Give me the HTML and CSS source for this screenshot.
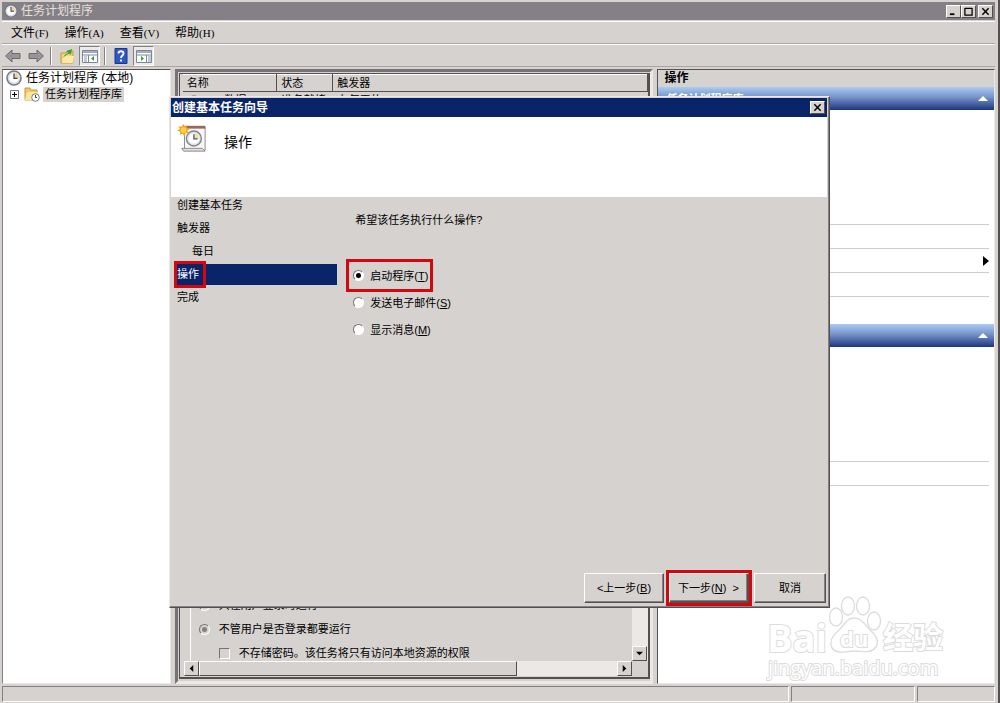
FILE: index.html
```
<!DOCTYPE html>
<html lang="zh-CN">
<head>
<meta charset="utf-8">
<title>任务计划程序</title>
<link rel="stylesheet" href="styles.css">
</head>
<body>

<svg class="defs" width="0" height="0">
  <symbol id="clock" viewBox="0 0 16 16">
    <circle cx="8" cy="8" r="7" fill="#e9eef3" stroke="#777b84" stroke-width="1.6"/>
    <circle cx="8" cy="8" r="5.2" fill="#fff" stroke="#b6c3d2" stroke-width=".6"/>
    <path d="M8 8V3a5 5 0 0 1 4.6 5z" fill="#f5d58a"/>
    <path d="M8 3.5V8.300h3.500" fill="none" stroke="#39415a" stroke-width="1.200"/>
  </symbol>
  <symbol id="close" viewBox="0 0 10 10">
    <path d="M1.500 1.500l7 7M8.500 1.500l-7 7" stroke="#000" stroke-width="1.600"/>
  </symbol>
</svg>

<div class="window">
  <header class="titlebar">
    <svg class="icon14"><use href="#clock"/></svg>
    <h1>任务计划程序</h1>
    <div class="winbtns">
      <button class="winbtn" aria-label="最小化"><svg viewBox="0 0 10 10"><path d="M1 8h5" stroke="#000" stroke-width="2"/></svg></button>
      <button class="winbtn" aria-label="最大化"><svg viewBox="0 0 10 10"><path d="M1 1.500h8M1 1v8h8V1" fill="none" stroke="#000" stroke-width="1.400"/></svg></button>
      <button class="winbtn last" aria-label="关闭"><svg><use href="#close"/></svg></button>
    </div>
  </header>

  <nav class="menubar">
    <button>文件<span class="key">(F)</span></button>
    <button>操作<span class="key">(A)</span></button>
    <button>查看<span class="key">(V)</span></button>
    <button>帮助<span class="key">(H)</span></button>
  </nav>

  <div class="toolbar">
    <button class="tool" aria-label="后退"><svg viewBox="0 0 18 16"><path d="M1.500 8L8 2v3.500h8v5H8V14z" fill="#999497" stroke="#6e6a6c"/></svg></button>
    <button class="tool" aria-label="前进"><svg viewBox="0 0 18 16"><path d="M16.500 8L10 2v3.500H2v5h8V14z" fill="#999497" stroke="#6e6a6c"/></svg></button>
    <i class="sep"></i>
    <button class="tool" aria-label="向上"><svg viewBox="0 0 18 16"><path d="M3 5h5l1-2h6v12H3z" fill="#f3d477" stroke="#c39a3c"/><path d="M4 15l1-7h11l-1 7z" fill="#fbe9a4"/><path d="M5 10c1-3 3-4 5-5L8.500 3 14 1l-1 6-1.500-1.500C9 6 7 8 5 10z" fill="#39a332"/></svg></button>
    <button class="tool pressed" aria-label="显示控制台树"><svg viewBox="0 0 18 16"><path d="M1.500 2.500h15v12h-15z" fill="#fff" stroke="#7e8795"/><path d="M2 4h14" stroke="#a2acc0" stroke-width="2"/><path d="M2 7h14M7.500 7v7" stroke="#7e8795"/><path d="M3 9h3M3 11h3M3 13h3" stroke="#8292ba"/><path d="M13 8v5l-3-2.500z" fill="#2da04a"/></svg></button>
    <i class="sep"></i>
    <button class="tool help" aria-label="帮助"><svg viewBox="0 0 18 16"><path d="M3 .5h12v15H3z" fill="#2f57c4" stroke="#1d3788"/><path d="M6.500 5.500c0-3 5-3 5 0 0 2-2.500 2-2.500 4.500M9 11.500v2" fill="none" stroke="#fff" stroke-width="1.800"/></svg></button>
    <button class="tool pressed" aria-label="显示操作窗格"><svg viewBox="0 0 18 16"><path d="M1.500 2.500h15v12h-15z" fill="#fff" stroke="#7e8795"/><path d="M2 4h14" stroke="#a2acc0" stroke-width="2"/><path d="M2 7h14M11.500 7v7" stroke="#7e8795"/><path d="M13 9h3M13 11h3M13 13h3" stroke="#8292ba"/><path d="M6 8v5l3-2.500z" fill="#2da04a"/></svg></button>
  </div>

  <main class="panes">
    <aside class="tree">
      <div class="node">
        <svg class="icon16"><use href="#clock"/></svg>
        <span>任务计划程序 (本地)</span>
      </div>
      <div class="node child">
        <button class="plus" aria-label="展开"><svg viewBox="0 0 9 9"><path d="M.5.5h8v8h-8z" fill="#fff" stroke="#777"/><path d="M2 4.500h5M4.500 2v5" stroke="#000"/></svg></button>
        <svg class="icon16" viewBox="0 0 16 16"><path d="M1 14V2h5l1 2h6v10z" fill="#efc866" stroke="#c79a3a"/><path d="M1 14l2-8h11l-1 8z" fill="#fbe6a0"/><circle cx="11.500" cy="11.500" r="3.800" fill="#fff" stroke="#777b84"/><path d="M11.500 9v2.500H13" fill="none" stroke="#39415a"/></svg>
        <span class="picked">任务计划程序库</span>
      </div>
    </aside>

    <section class="center">
      <div class="inner">
        <table class="tasks">
          <thead>
            <tr><th class="c1">名称</th><th class="c2">状态</th><th>触发器</th></tr>
          </thead>
          <tbody>
            <tr><td><svg class="icon12"><use href="#clock"/></svg> 050 数据</td><td>准备就绪</td><td>在每天的 0:00</td></tr>
          </tbody>
        </table>
        <div class="details">
          <div class="options">
            <label class="opt"><input type="radio" name="logon" disabled>只在用户登录时运行</label>
            <label class="opt"><input type="radio" name="logon" checked disabled>不管用户是否登录都要运行</label>
            <label class="opt sub"><input type="checkbox" disabled>不存储密码。该任务将只有访问本地资源的权限</label>
          </div>
          <div class="vscroll"><button class="arrow" aria-label="向下滚动"><svg viewBox="0 0 8 8"><path d="M0 2h8L4 6z"/></svg></button></div>
        </div>
        <div class="hscroll">
          <button class="arrow" aria-label="向左滚动"><svg viewBox="0 0 8 8"><path d="M6 0v8L2 4z"/></svg></button>
          <div class="track"><div class="thumb"></div></div>
          <button class="arrow" aria-label="向右滚动"><svg viewBox="0 0 8 8"><path d="M2 0v8l4-4z"/></svg></button>
        </div>
      </div>
    </section>

    <aside class="actions">
      <h2>操作</h2>
      <div class="group"><span>任务计划程序库</span><svg class="up" viewBox="0 0 10 6"><path d="M5 0l5 5H0z" fill="#fff"/></svg></div>
      <ul class="items">
        <li class="tall"></li>
        <li></li>
        <li class="more"><svg viewBox="0 0 6 10"><path d="M0 0l6 5-6 5z"/></svg></li>
        <li></li>
      </ul>
      <div class="group"><span></span><svg class="up" viewBox="0 0 10 6"><path d="M5 0l5 5H0z" fill="#fff"/></svg></div>
      <ul class="items">
        <li class="tall"></li>
        <li></li>
      </ul>
    </aside>
  </main>

  <footer class="status"><span></span><span></span><span></span></footer>
</div>

<!-- wizard -->
<div class="dialog" role="dialog" aria-labelledby="wiz">
  <div class="dlgtitle">
    <h2 id="wiz">创建基本任务向导</h2>
    <button class="winbtn" aria-label="关闭"><svg><use href="#close"/></svg></button>
  </div>
  <div class="dlghead">
    <svg class="big" viewBox="0 0 32 32">
      <path d="M8 4h22v25H8z" fill="#faf8f6" stroke="#8d8585"/>
      <path d="M8 3h22v3H8z" fill="#9d6553"/>
      <path d="M5 27h22l3 3H7z" fill="#e3dfe0" stroke="#8d8585"/>
      <circle cx="18" cy="16.500" r="8" fill="#dfe6ee" stroke="#7e8592" stroke-width="1.500"/>
      <circle cx="18" cy="16.500" r="5.500" fill="#fff"/>
      <path d="M18 16.500V11a5.500 5.500 0 0 1 5.500 5.500z" fill="#f6dda0"/>
      <path d="M18 12v5h4" fill="none" stroke="#43506b" stroke-width="1.300"/>
      <path d="M7 1l1.300 3L11 2.500l-.7 3 3.200.8-2.700 1.900 1.700 2.800-3.200-.5L8 14l-2-2.900L3 12.500l.5-3.200L0 8l3.200-1.700L1.500 3.500l3.300.6z" fill="#f7a21b"/>
      <circle cx="7" cy="7.500" r="3" fill="#ffd04a"/>
    </svg>
    <h3>操作</h3>
  </div>
  <div class="dlgbody">
    <ol class="steps">
      <li>创建基本任务</li>
      <li>触发器</li>
      <li class="indent">每日</li>
      <li class="current"><span class="mark">操作</span></li>
      <li>完成</li>
    </ol>
    <fieldset class="choices">
      <legend>希望该任务执行什么操作?</legend>
      <label class="opt mark"><input type="radio" name="act" checked>启动程序(<u>T</u>)</label>
      <label class="opt"><input type="radio" name="act">发送电子邮件(<u>S</u>)</label>
      <label class="opt"><input type="radio" name="act">显示消息(<u>M</u>)</label>
    </fieldset>
  </div>
  <div class="dlgfoot">
    <button class="btn">&lt;上一步(<u>B</u>)</button>
    <span class="mark"><button class="btn default">下一步(<u>N</u>)&nbsp; &gt;</button></span>
    <button class="btn cancel">取消</button>
  </div>
</div>

<svg class="watermark" viewBox="0 0 184 88">
  <g fill="#fff" stroke="#dcdcdc" stroke-width="1.300">
    <text class="wm-big" x="1" y="57">Bai</text>
    <path d="M88 23c8 0 11 7 16 12 7 6 9 12 6 17-5 7-14 4-22 4s-17 4-22-3c-3-6-1-11 6-17 6-5 8-13 16-13z"/>
    <ellipse cx="70" cy="22" rx="6.500" ry="9"/>
    <ellipse cx="82" cy="11" rx="6.500" ry="9"/>
    <ellipse cx="97" cy="11" rx="6.500" ry="9"/>
    <ellipse cx="108" cy="26" rx="6.500" ry="9"/>
    <text class="wm-du" x="74" y="52">du</text>
    <text class="wm-cn" x="117" y="53">经验</text>
    <text class="wm-url" x="2" y="80">jingyan.baidu.com</text>
  </g>
</svg>

</body>
</html>
```
FILE: styles.css
```
* {
  box-sizing: border-box;
}
body {
  margin: 0;
  font: 11px/16px "Liberation Sans", "Noto Sans CJK SC", sans-serif;
  color: #000;
  background: #d6d2cf;
}
h1, h2, h3, ul, ol {
  margin: 0;
  padding: 0;
  list-style: none;
}
button {
  font: inherit;
  color: inherit;
  padding: 0;
  border: 0;
  background: none;
}
svg {
  display: block;
  flex: none;
}
.defs {
  position: absolute;
}
.icon12 { width: 12px; height: 12px; display: inline-block; vertical-align: middle; }
.icon14 { width: 14px; height: 14px; }
.icon16 { width: 16px; height: 16px; }

/* main window */
.window {
  display: flex;
  flex-direction: column;
  height: 100vh;
  padding: 2px 3px 1px 2px;
  border-right: 2px solid #55504f;
  overflow: hidden;
}
.titlebar {
  display: flex;
  align-items: center;
  height: 18px;
  padding: 0 2px;
  gap: 3px;
  background: #858085;
  color: #e4e0dd;
}
.titlebar h1 {
  flex: 1;
  font-size: 12px;
  font-weight: normal;
}
.winbtns {
  display: flex;
}
.winbtn {
  display: flex;
  align-items: center;
  justify-content: center;
  width: 15px;
  height: 13px;
  background: #d6d2cf;
  border: 1px solid;
  border-color: #fff #55504f #55504f #fff;
}
.winbtn svg {
  width: 9px;
  height: 9px;
}
.winbtn.last {
  margin-left: 2px;
}
.menubar {
  display: flex;
  align-items: center;
  gap: 16px;
  height: 23px;
  margin-top: 1px;
  padding-left: 9px;
  border-top: 1px solid #fff;
  border-bottom: 1px solid #aaa5a3;
  font-size: 12px;
}
.key {
  font-family: "Liberation Serif", serif;
  font-size: 11px;
}
.toolbar {
  display: flex;
  align-items: center;
  gap: 2px;
  height: 23px;
  border-top: 1px solid #fff;
  border-bottom: 1px solid #aaa5a3;
}
.tool {
  display: flex;
  align-items: center;
  justify-content: center;
  width: 21px;
  height: 20px;
}
.tool svg {
  width: 18px;
  height: 16px;
}
.pressed {
  background: #eceae8;
  border: 1px solid;
  border-color: #858085 #fff #fff #858085;
}
.sep {
  width: 2px;
  height: 18px;
  margin: 0 2px;
  border-left: 1px solid #858085;
  border-right: 1px solid #fff;
}

/* panes */
.panes {
  flex: 1;
  display: grid;
  grid-template-columns: 17% 1fr 34%;
  gap: 4px;
  min-height: 0;
  padding-top: 2px;
}
.tree {
  padding: 0 0 0 3px;
  background: #fff;
  border: 1px solid;
  border-color: #55504f #ebe8e6 #ebe8e6 #858085;
}
.node {
  display: flex;
  align-items: center;
  gap: 4px;
  height: 16px;
  font-size: 12px;
  white-space: nowrap;
}
.child {
  padding-left: 4px;
  gap: 3px;
  font-size: 11px;
}
.plus, .plus svg {
  width: 9px;
  height: 9px;
}
.child .icon16 {
  margin-left: 2px;
}
.picked {
  padding: 0 2px;
  line-height: 15px;
  background: #d6d2cf;
}
.center {
  min-width: 0;
  border: 3px solid;
  border-color: #777276 #ebe8e6 #ebe8e6 #777276;
  padding: 1px 0 2px 1px;
}
.inner {
  display: flex;
  flex-direction: column;
  height: 100%;
  padding: 0 0 1px 3px;
  border: 2px solid #55504f;
  border-width: 1px 2px 2px 1px;
}
.tasks {
  width: 100%;
  border-collapse: collapse;
  table-layout: fixed;
  white-space: nowrap;
}
.tasks th {
  height: 17px;
  padding: 0 4px;
  text-align: left;
  font-weight: normal;
  border-top: 1px solid #fff;
  border-right: 1px solid #55504f;
  border-bottom: 1px solid #55504f;
}
.tasks td {
  height: 16px;
  padding: 0 5px;
  line-height: 14px;
}
.c1 { width: 94px; }
.c2 { width: 56px; }
.details {
  flex: 1;
  display: flex;
  min-height: 0;
}
.options {
  flex: 1;
  display: flex;
  flex-direction: column;
  justify-content: flex-end;
  gap: 8px;
  margin-left: 7px;
  padding-left: 8px;
  border-left: 1px solid #fff;
}
.opt {
  display: flex;
  align-items: center;
  white-space: nowrap;
}
.sub {
  padding-left: 20px;
}
input {
  appearance: none;
  flex: none;
  display: grid;
  place-items: center;
  width: 11px;
  height: 11px;
  margin: 0 9px 0 0;
  border: 1px solid;
  border-color: #777276 #fff #fff #777276;
}
input[type=radio] {
  border-radius: 50%;
  background: #fff;
}
input[type=radio]:checked::before {
  content: "";
  width: 5px;
  height: 5px;
  border-radius: 50%;
  background: #000;
}
input[type=radio]:disabled {
  background: #d6d2cf;
}
input[type=radio]:disabled::before {
  background: #858085;
}
.vscroll {
  display: flex;
  align-items: flex-end;
  width: 16px;
  background: #ebe8e6;
}
.arrow {
  display: flex;
  align-items: center;
  justify-content: center;
  width: 15px;
  height: 15px;
  background: #d6d2cf;
  border: 1px solid;
  border-color: #fff #55504f #55504f #fff;
}
.arrow svg {
  width: 7px;
  height: 7px;
}
.hscroll {
  display: flex;
  height: 15px;
  padding: 0 16px 0 1px;
}
.track {
  flex: 1;
  background: #ebe8e6;
}
.thumb {
  width: 76%;
  height: 100%;
  background: #d6d2cf;
  border: 1px solid;
  border-color: #fff #55504f #55504f #fff;
}
.actions {
  background: #fff;
  border: 1px solid;
  border-color: #55504f #ebe8e6 #ebe8e6 #55504f;
}
.actions h2 {
  height: 17px;
  padding-left: 6px;
  font-size: 12px;
  line-height: 17px;
  background: #d6d2cf;
}
.group {
  display: flex;
  align-items: center;
  justify-content: space-between;
  height: 23px;
  padding: 0 6px 0 8px;
  color: #fff;
  font-weight: bold;
  background: linear-gradient(#abcaf3, #7593c7 45%, #1c3580);
}
.up {
  width: 10px;
  height: 6px;
}
.items {
  padding-right: 5px;
  margin-bottom: 27px;
}
.items li {
  height: 24px;
  border-bottom: 1px solid #d0cdcb;
}
.items .tall {
  height: 115px;
}
.more {
  display: flex;
  align-items: center;
  justify-content: flex-end;
}
.more svg {
  width: 6px;
  height: 10px;
}
.status {
  display: grid;
  grid-template-columns: 1fr 124px 78px;
  gap: 2px;
  height: 18px;
  padding-top: 2px;
}
.status span {
  border: 1px solid;
  border-color: #858085 #fff #fff #858085;
}

/* wizard window */
.dialog {
  position: absolute;
  top: 96px;
  right: 170px;
  bottom: 95px;
  left: 169px;
  display: flex;
  flex-direction: column;
  padding: 1px 2px 1px 1px;
  background: #d6d2cf;
  border: 1px solid;
  border-color: #ebe8e6 #55504f #55504f #ebe8e6;
  box-shadow: inset -1px -1px #858085;
}
.dlgtitle {
  display: flex;
  align-items: center;
  justify-content: space-between;
  height: 19px;
  padding: 0 2px 0 1px;
  color: #fff;
  background: #0a246a;
}
.dlgtitle h2 {
  font-size: 12px;
}
.dlghead {
  display: flex;
  gap: 17px;
  height: 80px;
  padding: 5px 6px;
  background: #fff;
}
.big {
  width: 30px;
  height: 32px;
}
.dlghead h3 {
  font-size: 14px;
  font-weight: normal;
  line-height: 40px;
}
.dlgbody {
  flex: 1;
  display: flex;
  padding-left: 3px;
}
.steps {
  display: flex;
  flex-direction: column;
  gap: 2px;
  width: 25%;
  margin-top: -2px;
}
.steps li {
  padding-left: 3px;
  line-height: 21px;
}
.steps .indent {
  padding-left: 18px;
}
.steps .current {
  color: #fff;
  background: #0a246a;
}
.mark {
  outline: 3px solid #d4070f;
}
.steps .mark {
  display: inline-block;
  width: 26px;
}
.choices {
  display: flex;
  flex-direction: column;
  align-items: flex-start;
  margin: 0 0 0 12px;
  padding: 15px 0 0;
  border: 0;
}
.choices legend {
  float: left;
  margin-bottom: 34px;
  padding: 0 0 0 6px;
}
.choices .opt {
  height: 27px;
  padding: 0 2px 0 4px;
}
.choices input {
  margin-right: 6px;
}
.dlgfoot {
  display: flex;
  gap: 5px;
  justify-content: flex-end;
  padding: 0 1px 3px;
}
.btn {
  width: 80px;
  height: 30px;
  border: 1px solid;
  border-color: #fff #55504f #55504f #fff;
  box-shadow: inset -1px -1px #858085;
}
.default {
  border-right-width: 2px;
  border-bottom-width: 2px;
}
.cancel {
  width: 72px;
}

.watermark {
  position: absolute;
  right: 50px;
  bottom: 20px;
  width: 184px;
  height: 88px;
}
.watermark text {
  paint-order: stroke;
  stroke-width: 2px;
}
.wm-big { font: bold 38px "Open Sans", sans-serif; }
.wm-du { font: bold 22px "Open Sans", sans-serif; }
.wm-cn { font: bold 30px "Noto Sans CJK SC", sans-serif; }
.wm-url { font: 20px "Open Sans", sans-serif; }
```
